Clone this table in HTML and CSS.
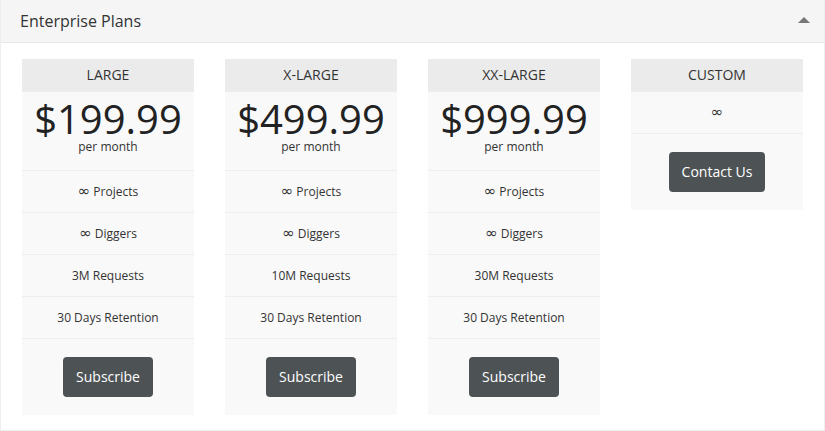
FILE: index.html
```html
<!DOCTYPE html>
<html>
<head>
<meta charset="utf-8">
<link rel="stylesheet" href="styles.css">
</head>
<body>
<div class="panel">
  <div class="panel-heading">
    <span class="panel-title">Enterprise Plans</span>
    <span class="caret-up"></span>
  </div>
  <div class="panel-body">
    <ul class="plan">
      <li class="plan-name">LARGE</li>
      <li class="plan-price"><div class="amount">$199.99</div><div class="period">per month</div></li>
      <li class="plan-row"><span class="inf">∞</span> Projects</li>
      <li class="plan-row"><span class="inf">∞</span> Diggers</li>
      <li class="plan-row">3M Requests</li>
      <li class="plan-row">30 Days Retention</li>
      <li class="plan-action"><a class="btn">Subscribe</a></li>
    </ul>
    <ul class="plan">
      <li class="plan-name">X-LARGE</li>
      <li class="plan-price"><div class="amount">$499.99</div><div class="period">per month</div></li>
      <li class="plan-row"><span class="inf">∞</span> Projects</li>
      <li class="plan-row"><span class="inf">∞</span> Diggers</li>
      <li class="plan-row">10M Requests</li>
      <li class="plan-row">30 Days Retention</li>
      <li class="plan-action"><a class="btn">Subscribe</a></li>
    </ul>
    <ul class="plan">
      <li class="plan-name">XX-LARGE</li>
      <li class="plan-price"><div class="amount">$999.99</div><div class="period">per month</div></li>
      <li class="plan-row"><span class="inf">∞</span> Projects</li>
      <li class="plan-row"><span class="inf">∞</span> Diggers</li>
      <li class="plan-row">30M Requests</li>
      <li class="plan-row">30 Days Retention</li>
      <li class="plan-action"><a class="btn">Subscribe</a></li>
    </ul>
    <ul class="plan">
      <li class="plan-name">CUSTOM</li>
      <li class="plan-row"><span class="inf">∞</span></li>
      <li class="plan-action"><a class="btn">Contact Us</a></li>
    </ul>
  </div>
</div>
</body>
</html>
```
FILE: styles.css
```css
html, body {
  margin: 0;
  padding: 0;
  background: #fff;
}
body {
  font-family: "Open Sans", "Liberation Sans", sans-serif;
  color: #333;
}
.panel {
  height: 431px;
  box-sizing: border-box;
  border: 1px solid #eeeeee;
  border-top: none;
  background: #fff;
}
.panel-heading {
  height: 43px;
  box-sizing: border-box;
  background: #f5f5f5;
  border-bottom: 1px solid #e8e8e8;
  display: flex;
  align-items: center;
  justify-content: space-between;
  padding: 0 14px 0 19px;
}
.panel-title {
  font-size: 16px;
  color: #333;
}
.caret-up {
  width: 0;
  height: 0;
  border-left: 6px solid transparent;
  border-right: 6px solid transparent;
  border-bottom: 6px solid #777;
  margin-top: -2px;
}
.panel-body {
  display: grid;
  grid-template-columns: repeat(4, 172px);
  column-gap: 31px;
  align-items: start;
  padding: 16px 0 0 21px;
}
.plan {
  list-style: none;
  margin: 0;
  padding: 0;
  background: #f9f9f9;
  text-align: center;
}
.plan li {
  border-top: 1px solid #eeeeee;
}
.plan li.plan-name {
  border-top: none;
  background: #ebebeb;
  height: 32px;
  line-height: 32px;
  font-size: 14px;
  color: #333;
}
.plan-price {
  height: 79px;
  box-sizing: border-box;
  padding-top: 7px;
}
.amount {
  font-size: 40px;
  line-height: 40px;
  color: #222;
}
.period {
  font-size: 12px;
  line-height: 13px;
  margin-top: 1px;
}
.plan-row {
  height: 41px;
  line-height: 41px;
  font-size: 12px;
}
.inf {
  font-family: "DejaVu Sans", sans-serif;
  font-size: 15px;
  line-height: 1;
}
.plan-action {
  padding: 18px 0 18px;
}
.btn {
  display: inline-block;
  height: 40px;
  line-height: 40px;
  padding: 0 13px;
  border-radius: 4px;
  background: #4d5355;
  color: #fff;
  font-size: 14px;
}
```
